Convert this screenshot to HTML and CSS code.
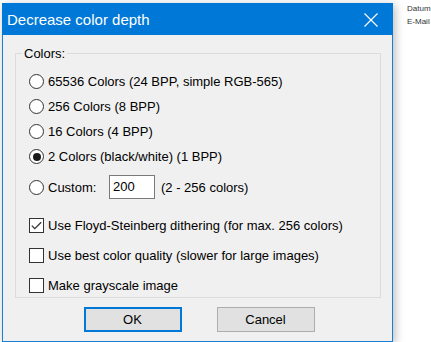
FILE: index.html
```html
<!DOCTYPE html>
<html lang="en">
<head>
    <meta charset="UTF-8">
    <meta name="viewport" content="width=device-width, initial-scale=1.0">
    <title>Decrease color depth</title>
    <link rel="stylesheet" href="styles.css">
</head>
<body>
    <div class="desktop">
        <div class="back-form">
            <div class="back-label">Datum</div>
            <div class="back-label">E-Mail</div>
        </div>

        <div class="dialog">
            <div class="titlebar">
                <span class="title">Decrease color depth</span>
                <svg class="close" width="14" height="14" viewBox="0 0 14 14">
                    <path d="M0.5 0.5 L13.5 13.5 M13.5 0.5 L0.5 13.5" stroke="#fff" stroke-width="1.2" fill="none"/>
                </svg>
            </div>

            <div class="client">
                <fieldset class="group">
                    <legend>Colors:</legend>
                    <div class="row radio-row"><span class="radio"></span>65536 Colors (24 BPP, simple RGB-565)</div>
                    <div class="row radio-row"><span class="radio"></span>256 Colors (8 BPP)</div>
                    <div class="row radio-row"><span class="radio"></span>16 Colors (4 BPP)</div>
                    <div class="row radio-row"><span class="radio selected"></span>2 Colors (black/white) (1 BPP)</div>
                    <div class="row custom-row">
                        <span class="radio"></span>
                        <span class="custom-label">Custom:</span>
                        <span class="num-box">200</span>
                        <span>(2 - 256 colors)</span>
                    </div>

                    <div class="checks">
                        <div class="row check-row">
                            <span class="check">
                                <svg width="11" height="9" viewBox="0 0 11 9">
                                    <path d="M0.8 4.6 L3.8 7.6 L10.2 1.2" stroke="#333" stroke-width="1.3" fill="none"/>
                                </svg>
                            </span>
                            Use Floyd-Steinberg dithering (for max. 256 colors)
                        </div>
                        <div class="row check-row"><span class="check"></span>Use best color quality (slower for large images)</div>
                        <div class="row check-row"><span class="check"></span>Make grayscale image</div>
                    </div>
                </fieldset>

                <div class="buttons">
                    <button class="btn default">OK</button>
                    <button class="btn">Cancel</button>
                </div>
            </div>
        </div>
    </div>
</body>
</html>
```

FILE: styles.css
```css
body {
    margin: 0;
    background: #fff;
    font-family: "Liberation Sans", Arial, sans-serif;
    color: #000;
}
.desktop {
    position: relative;
    width: 431px;
    height: 342px;
    overflow: hidden;
}
.back-form {
    padding: 2px 0 0 407px;
}
.back-label {
    font-size: 8px;
    line-height: 13px;
    color: #333;
}
.dialog {
    position: absolute;
    left: 2px;
    top: 3px;
    width: 389px;
    height: 337px;
    border: 1px solid #1a7fd4;
    background: #f0f0f0;
    box-shadow: 2px 2px 9px rgba(0, 0, 0, 0.28);
    display: flex;
    flex-direction: column;
}
.titlebar {
    height: 31px;
    background: #0078d7;
    display: flex;
    align-items: center;
    justify-content: space-between;
    padding: 0 15px 0 5px;
    margin: -1px -1px 0 -1px;
    padding-top: 1px;
}
.title {
    color: #fff;
    font-size: 15px;
}
.close {
    display: block;
    margin-top: 1px;
}
.client {
    flex: 1;
    padding: 11px 11px 0 12px;
}
.group {
    margin: 0;
    padding: 8px 0 0 13px;
    height: 252px;
    box-sizing: border-box;
    border: 1px solid #dcdcdc;
}
.group legend {
    font-size: 13px;
    padding: 0 2px;
    margin-left: -7px;
    line-height: 15px;
}
.row {
    display: flex;
    align-items: center;
    font-size: 13px;
    white-space: nowrap;
}
.radio-row {
    height: 25px;
}
.radio {
    width: 13px;
    height: 13px;
    border: 1px solid #333;
    border-radius: 50%;
    background: #fff;
    margin-right: 4px;
    display: flex;
    align-items: center;
    justify-content: center;
    flex-shrink: 0;
}
.radio.selected::after {
    content: "";
    width: 8px;
    height: 8px;
    border-radius: 50%;
    background: #1a1a1a;
}
.custom-row {
    height: 28px;
    margin-top: 4px;
}
.custom-label {
    width: 61px;
}
.num-box {
    width: 41px;
    height: 22px;
    border: 1px solid #7a7a7a;
    background: #fff;
    padding-left: 3px;
    line-height: 22px;
    margin-right: 6px;
}
.checks {
    margin-top: 12px;
    display: flex;
    flex-direction: column;
    gap: 6px;
}
.check-row {
    height: 24px;
}
.check {
    width: 13px;
    height: 13px;
    border: 1px solid #333;
    background: #fff;
    margin-right: 4px;
    display: flex;
    align-items: center;
    justify-content: center;
    flex-shrink: 0;
}
.buttons {
    display: flex;
    justify-content: center;
    gap: 35px;
    margin-top: 9px;
    padding-left: 2px;
}
.btn {
    width: 98px;
    height: 25px;
    font-family: "Liberation Sans", Arial, sans-serif;
    font-size: 13px;
    color: #000;
    background: #e1e1e1;
    border: 1px solid #adadad;
    padding: 0;
}
.btn.default {
    border: 2px solid #0078d7;
}
```
